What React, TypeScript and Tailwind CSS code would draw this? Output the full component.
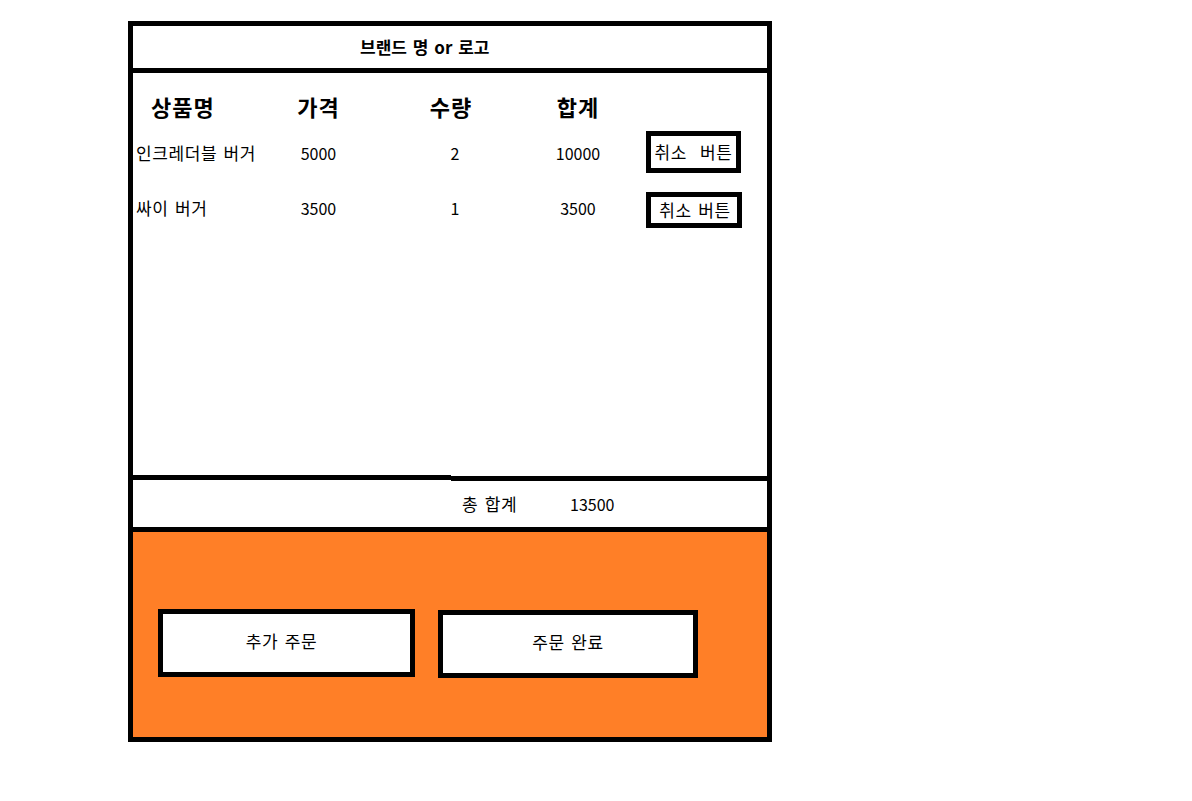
import React from "react";

interface OrderItem {
  name: string;
  price: number;
  qty: number;
  total: number;
  cancelLabel: string;
  rowClass: string;
  cellClass: string;
  buttonClass: string;
}

const items: OrderItem[] = [
  {
    name: "인크레더블 버거",
    price: 5000,
    qty: 2,
    total: 10000,
    cancelLabel: "취소  버튼",
    rowClass: "mt-[6px]",
    cellClass: "pt-[1px]",
    buttonClass: "w-[95px] h-[42px]",
  },
  {
    name: "싸이 버거",
    price: 3500,
    qty: 1,
    total: 3500,
    cancelLabel: "취소 버튼",
    rowClass: "mt-[19px]",
    cellClass: "pb-[5px]",
    buttonClass: "w-[96px] h-[36px] pl-[2px]",
  },
];

const hangul = "text-[17px] tracking-[0.6px] [word-spacing:2px]";

const ItemRow = ({ item }: { item: OrderItem }) => (
  <div className={`flex items-center text-[16px] leading-none ${item.rowClass}`}>
    <div className={`w-[125px] pl-[3px] whitespace-nowrap ${hangul} ${item.cellClass}`}>{item.name}</div>
    <div className={`w-[121px] text-center ${item.cellClass}`}>{item.price}</div>
    <div className={`w-[152px] text-center ${item.cellClass}`}>{item.qty}</div>
    <div className={`w-[94px] text-center ${item.cellClass}`}>{item.total}</div>
    <div className="pl-[21px]">
      <div
        className={`${item.buttonClass} border-[5px] border-black flex items-center justify-center whitespace-pre bg-white pb-[2px] ${hangul}`}
      >
        {item.cancelLabel}
      </div>
    </div>
  </div>
);

const App = () => {
  const sum = items.reduce((acc, i) => acc + i.total, 0);

  return (
    <div className="min-h-screen bg-white text-black font-['Noto_Sans_CJK_KR','Noto_Sans',sans-serif]">
      <div className="ml-[128px] pt-[21px] w-[644px]">
        {/* 상단 브랜드 영역 */}
        <div className="h-[52px] border-[5px] border-black flex items-center pl-[227px] pb-[2px]">
          <span className="text-[17px] font-bold leading-none [word-spacing:2px] whitespace-nowrap">
            브랜드 명 or 로고
          </span>
        </div>

        <div className="border-x-[5px] border-b-[5px] border-black">
          {/* 주문 목록 */}
          <div className="h-[402px] pt-[18px]">
            <div className="flex items-center h-[34px] pb-[4px] text-[22px] font-bold leading-none tracking-[1px]">
              <div className="w-[125px] pl-[18px]">상품명</div>
              <div className="w-[121px] text-center">가격</div>
              <div className="w-[152px] text-center pr-[8px]">수량</div>
              <div className="w-[94px] text-center">합계</div>
            </div>
            {items.map((item) => (
              <ItemRow key={item.name} item={item} />
            ))}
          </div>

          {/* 삐뚤게 그려진 구분선 */}
          <div className="flex h-[6px]">
            <div className="w-[318px] h-[5px] bg-black" />
            <div className="flex-1 h-[5px] mt-[1px] bg-black" />
          </div>

          {/* 총 합계 */}
          <div className="h-[46px] flex items-center leading-none pb-[1px]">
            <span className={`pl-[329px] w-[437px] whitespace-nowrap ${hangul}`}>총 합계</span>
            <span className="text-[16px]">{sum}</span>
          </div>

          {/* 하단 버튼 영역 */}
          <div className="border-t-[5px] border-black bg-[#ff7f27] h-[210px] pt-[77px] pl-[25px] flex items-start">
            <div
              className={`w-[257px] h-[68px] border-[5px] border-black bg-white flex items-center justify-center pr-[10px] pb-[5px] leading-none ${hangul}`}
            >
              추가 주문
            </div>
            <div
              className={`ml-[23px] mt-[1px] w-[260px] h-[68px] border-[5px] border-black bg-white flex items-center justify-center pb-[5px] leading-none ${hangul}`}
            >
              주문 완료
            </div>
          </div>
        </div>
      </div>
    </div>
  );
};

export default App;
